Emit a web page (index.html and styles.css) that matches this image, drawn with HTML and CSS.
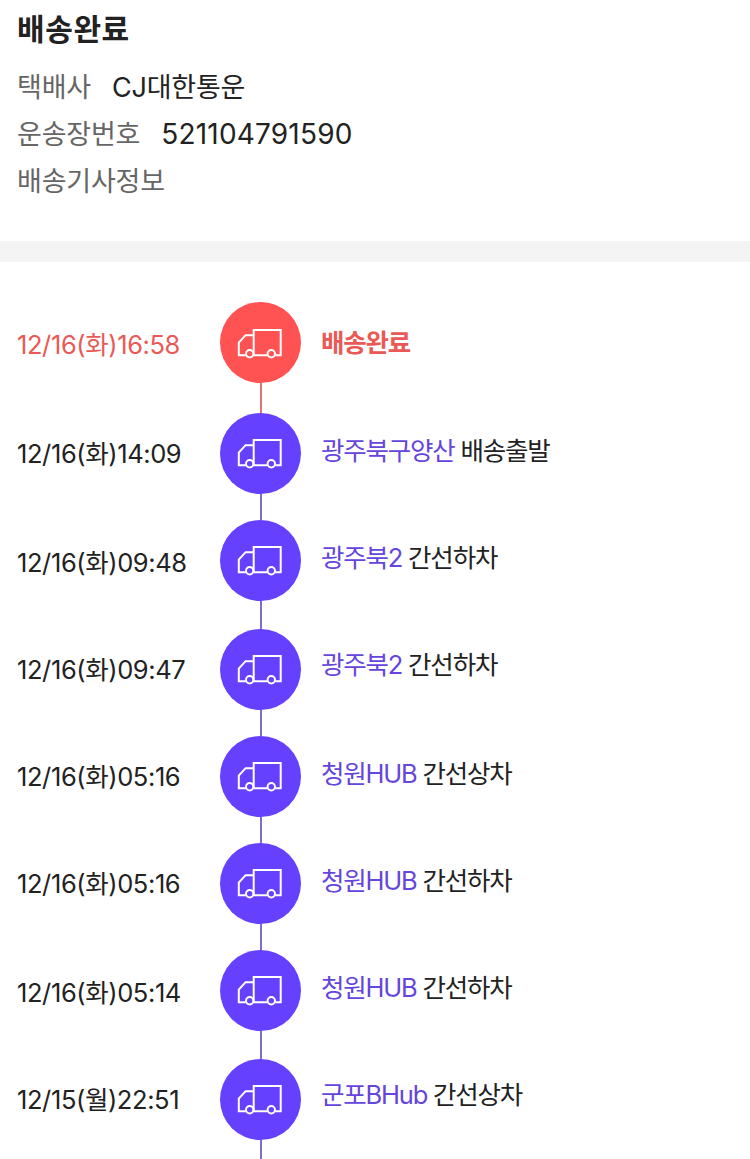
FILE: index.html
```
<!DOCTYPE html>
<html lang="ko">
<head>
  <meta charset="UTF-8">
  <meta name="viewport" content="width=device-width, initial-scale=1">
  <title>배송조회</title>
  <link rel="stylesheet" href="styles.css">
</head>
<body>
  <svg width="0" height="0" class="sprite">
    <symbol id="truck" viewBox="0 0 46 31">
      <path d="M8.7 27.3H1.8V14.7L8.6 7.2H16.7M16.7 27.3V2H43.7V27.3H38.2M30.4 27.3H16.6"/>
      <circle cx="12.7" cy="25.7" r="3.7"/>
      <circle cx="34.3" cy="25.7" r="3.7"/>
    </symbol>
  </svg>

  <header class="summary">
    <h1>배송완료</h1>
    <dl>
      <div class="info"><dt>택배사</dt><dd>CJ대한통운</dd></div>
      <div class="info"><dt>운송장번호</dt><dd class="number">521104791590</dd></div>
      <div class="info"><dt>배송기사정보</dt></div>
    </dl>
  </header>

  <ol class="timeline">
    <li class="step done">
      <time>12/16(화)16:58</time>
      <div class="track"><span class="dot"><svg><use href="#truck"/></svg></span></div>
      <p>배송완료</p>
    </li>
    <li class="step">
      <time>12/16(화)14:09</time>
      <div class="track"><span class="dot"><svg><use href="#truck"/></svg></span></div>
      <p><a>광주북구양산</a> 배송출발</p>
    </li>
    <li class="step tall">
      <time>12/16(화)09:48</time>
      <div class="track"><span class="dot"><svg><use href="#truck"/></svg></span></div>
      <p><a>광주북2</a> 간선하차</p>
    </li>
    <li class="step">
      <time>12/16(화)09:47</time>
      <div class="track"><span class="dot"><svg><use href="#truck"/></svg></span></div>
      <p><a>광주북2</a> 간선하차</p>
    </li>
    <li class="step">
      <time>12/16(화)05:16</time>
      <div class="track"><span class="dot"><svg><use href="#truck"/></svg></span></div>
      <p><a>청원HUB</a> 간선상차</p>
    </li>
    <li class="step">
      <time>12/16(화)05:16</time>
      <div class="track"><span class="dot"><svg><use href="#truck"/></svg></span></div>
      <p><a>청원HUB</a> 간선하차</p>
    </li>
    <li class="step tall">
      <time>12/16(화)05:14</time>
      <div class="track"><span class="dot"><svg><use href="#truck"/></svg></span></div>
      <p><a>청원HUB</a> 간선하차</p>
    </li>
    <li class="step">
      <time>12/15(월)22:51</time>
      <div class="track"><span class="dot"><svg><use href="#truck"/></svg></span></div>
      <p><a>군포BHub</a> 간선상차</p>
    </li>
  </ol>
</body>
</html>
```
FILE: styles.css
```
* {
  box-sizing: border-box;
  margin: 0;
  padding: 0;
}

body {
  height: 1159px;
  overflow: hidden;
  background: #fff;
  color: #222;
  font-family: Inter, "Noto Sans CJK KR", sans-serif;
}

.sprite {
  display: block;
}

.summary {
  height: 262px;
  padding: 8px 17px 0;
  border-bottom: 21px solid #f4f4f4;
}

h1 {
  font-size: 30px;
  font-weight: 700;
  line-height: 42px;
  letter-spacing: 0.6px;
}

dl {
  margin-top: 14px;
}

.info {
  display: flex;
  gap: 21px;
  height: 47px;
  font-size: 27px;
  line-height: 47px;
  letter-spacing: -0.2px;
}

.number {
  font-size: 28px;
  letter-spacing: 0.2px;
}

dt {
  color: #666;
}

.timeline {
  padding: 40px 17px 0;
  list-style: none;
}

.step {
  display: flex;
  height: 107px;
  font-size: 25.5px;
  line-height: 81px;
}

.step.tall {
  height: 109px;
}

.step time {
  width: 203px;
  letter-spacing: -0.4px;
}

.step.tall time,
.step.done time {
  padding-top: 2px;
}

.track {
  display: flex;
  flex-direction: column;
  align-items: center;
  width: 81px;
  margin-right: 20px;
}

.track::after {
  content: "";
  flex: 1;
  width: 2px;
  background: #7f6bd2;
}

.dot {
  display: flex;
  justify-content: center;
  width: 81px;
  height: 81px;
  padding-top: 25px;
  border-radius: 50%;
  background: #6640ff;
}

.dot svg {
  width: 46px;
  height: 31px;
  margin-right: 1px;
  fill: none;
  stroke: #fff;
  stroke-width: 2;
}

.step p {
  margin-top: -3px;
  letter-spacing: -1.2px;
}

.step.tall + .step p {
  margin-top: -5px;
}

.step a {
  color: #6545dc;
}

.done {
  height: 111px;
  color: #e95a56;
}

.step.done p {
  margin-top: 0;
  font-weight: 700;
}

.done .dot {
  padding-top: 26px;
  background: #ff5252;
}

.done .track::after {
  background: #dc7472;
}
```
